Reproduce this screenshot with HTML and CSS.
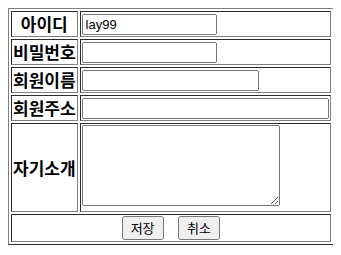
FILE: index.html
```html
<!DOCTYPE html>
<html lang="ko">
<head>
  <meta charset="UTF-8" />
  <meta name="viewport" content="width=device-width, initial-scale=1.0"/>
  <title>회원정보</title>
  <link rel="stylesheet" href="styles.css">
</head>
<body>
  <form>
    <table class="member-table">
      <tr>
        <th>아이디</th>
        <td><input type="text" class="w-short" value="lay99"></td>
      </tr>
      <tr>
        <th>비밀번호</th>
        <td><input type="password" class="w-short"></td>
      </tr>
      <tr>
        <th>회원이름</th>
        <td><input type="text" class="w-mid"></td>
      </tr>
      <tr>
        <th>회원주소</th>
        <td><input type="text" class="w-long"></td>
      </tr>
      <tr>
        <th>자기소개</th>
        <td><textarea class="intro"></textarea></td>
      </tr>
      <tr>
        <td colspan="2" class="button-cell">
          <button type="submit">저장</button>
          <button type="reset">취소</button>
        </td>
      </tr>
    </table>
  </form>
</body>
</html>
```

FILE: styles.css
```css
body {
  margin: 8px;
  font-family: "Liberation Sans", "Noto Sans CJK KR", sans-serif;
}
.member-table {
  border: 1px outset gray;
  border-spacing: 2px;
}
.member-table th,
.member-table td {
  border: 1px inset gray;
  padding: 1px;
}
.member-table th {
  font-family: "Noto Sans CJK KR", sans-serif;
  font-size: 17px;
  font-weight: bold;
  line-height: 22px;
  white-space: nowrap;
}
input {
  box-sizing: border-box;
  height: 21px;
  font-family: "Liberation Sans", Arial, sans-serif;
  font-size: 13px;
  padding: 1px 2px;
}
.w-short {
  width: 135px;
}
.w-mid {
  width: 177px;
}
.w-long {
  width: 247px;
}
.intro {
  box-sizing: border-box;
  width: 198px;
  height: 81px;
}
.button-cell {
  text-align: center;
  padding: 2px 1px;
}
button {
  font-family: "Noto Sans CJK KR", sans-serif;
  font-size: 13px;
  line-height: 16px;
  padding: 2px 7px;
  margin: 0 5px;
}
```
